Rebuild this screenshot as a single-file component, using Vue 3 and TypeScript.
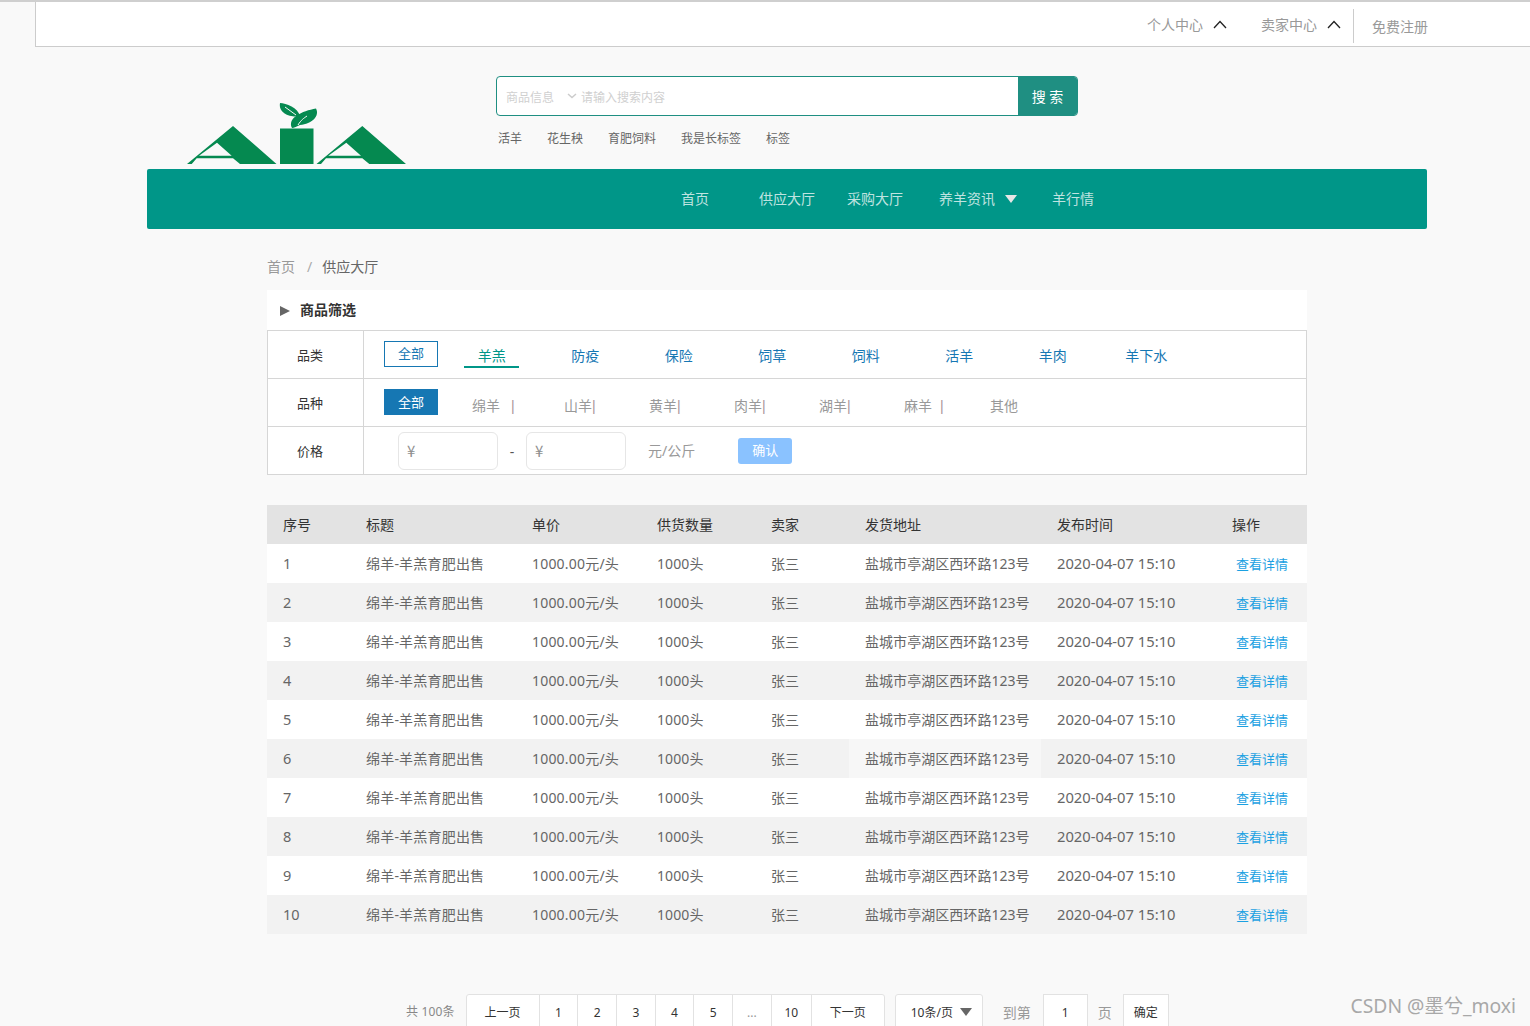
<script setup lang="ts">
const tags: string[] = ['活羊', '花生秧', '育肥饲料', '我是长标签', '标签']
const categories: string[] = ['羊羔', '防疫', '保险', '饲草', '饲料', '活羊', '羊肉', '羊下水']
const breeds: { name: string; sep: string }[] = [
  { name: '绵羊', sep: 'wide' },
  { name: '山羊', sep: 'tight' },
  { name: '黄羊', sep: 'tight' },
  { name: '肉羊', sep: 'tight' },
  { name: '湖羊', sep: 'tight' },
  { name: '麻羊', sep: 'mid' },
  { name: '其他', sep: '' },
]
const heads: string[] = ['序号', '标题', '单价', '供货数量', '卖家', '发货地址', '发布时间', '操作']
const rows: number[] = [1, 2, 3, 4, 5, 6, 7, 8, 9, 10]
const pages: string[] = ['1', '2', '3', '4', '5', '...', '10']
</script>

<template>
  <div class="page">
    <div class="topbar">
      <a class="top-link">个人中心</a>
      <svg class="chev" width="14" height="10" viewBox="0 0 14 10"><path d="M1 9 L7 2.5 L13 9" /></svg>
      <a class="top-link second">卖家中心</a>
      <svg class="chev" width="14" height="10" viewBox="0 0 14 10"><path d="M1 9 L7 2.5 L13 9" /></svg>
      <i class="top-divider"></i>
      <a class="top-reg">免费注册</a>
    </div>

    <div class="wrap">
      <header class="head">
        <svg class="logo" width="219" height="63" viewBox="187 102 219 63">
          <g fill="#058950">
            <path fill-rule="evenodd" d="M187 164 L233 126 L276.500 164 L240 164 L233 158.300 L196.700 158.300 L191.700 164 Z M217 142.700 L199 155.700 L231.700 155.700 Z" />
            <path fill-rule="evenodd" d="M316.500 164 L362.300 126 L406 164 L369.300 164 L362.300 158.300 L326 158.300 L321 164 Z M346.300 142.700 L328.300 155.700 L361 155.700 Z" />
            <rect x="280" y="128.500" width="33.500" height="35.500" />
            <path d="M280 103 C286 103 298 108 300 116 C292 118 278 114 280 103 Z" />
            <path d="M292 128 C287 118 302 111 316 108.500 C320 116 312 124 300 125 C297 126 294 128 292 128 Z" />
          </g>
          <path d="M285 107 L296 115 M298 125 C301 120 304 118 307 116" fill="none" stroke="#f9f9f9" stroke-width="1" />
        </svg>
        <div class="search-col">
          <div class="search">
            <span class="s-type">商品信息</span>
            <svg class="s-arrow" width="10" height="6" viewBox="0 0 10 6"><path d="M1 1 L5 4.500 L9 1" /></svg>
            <span class="s-hold">请输入搜索内容</span>
            <button class="s-btn" type="button">搜 索</button>
          </div>
          <div class="tags">
            <span v-for="t in tags" :key="t">{{ t }}</span>
          </div>
        </div>
      </header>

      <nav class="nav">
        <a class="n-home">首页</a>
        <a class="n-supply">供应大厅</a>
        <a class="n-buy">采购大厅</a>
        <a class="n-news">养羊资讯</a>
        <i class="n-caret"></i>
        <a class="n-market">羊行情</a>
      </nav>

      <main class="content">
        <div class="crumb"><span class="c-first">首页</span><span class="c-sep">/</span><span class="c-last">供应大厅</span></div>

        <div class="filter-title"><i class="ft-tri"></i><b>商品筛选</b></div>
        <div class="filter">
          <div class="f-row">
            <div class="f-label">品类</div>
            <div class="f-body">
              <span class="chip outline">全部</span>
              <div class="cats">
                <span v-for="(c, i) in categories" :key="c" class="cat" :class="{ active: i === 0 }">{{ c }}</span>
              </div>
            </div>
          </div>
          <div class="f-row">
            <div class="f-label">品种</div>
            <div class="f-body">
              <span class="chip solid">全部</span>
              <div class="breeds">
                <span v-for="b in breeds" :key="b.name" class="breed">{{ b.name }}<em v-if="b.sep" :class="b.sep">|</em></span>
              </div>
            </div>
          </div>
          <div class="f-row last">
            <div class="f-label">价格</div>
            <div class="f-body price">
              <div class="p-input">¥</div>
              <span class="p-dash">-</span>
              <div class="p-input">¥</div>
              <span class="p-unit">元/公斤</span>
              <button class="p-ok" type="button">确认</button>
            </div>
          </div>
        </div>

        <table class="grid">
          <colgroup>
            <col style="width: 83px" /><col style="width: 166px" /><col style="width: 125px" /><col style="width: 114px" />
            <col style="width: 94px" /><col style="width: 192px" /><col style="width: 175px" /><col style="width: 91px" />
          </colgroup>
          <thead>
            <tr><th v-for="h in heads" :key="h">{{ h }}</th></tr>
          </thead>
          <tbody>
            <tr v-for="n in rows" :key="n">
              <td class="num">{{ n }}</td>
              <td class="title">绵羊-羊羔育肥出售</td>
              <td class="unit">1000.00元/头</td>
              <td class="qty">1000头</td>
              <td>张三</td>
              <td class="addr" :class="{ hover: n === 6 }">盐城市亭湖区西环路123号</td>
              <td class="date">2020-04-07 15:10</td>
              <td class="op"><a>查看详情</a></td>
            </tr>
          </tbody>
        </table>

        <div class="pager">
          <span class="pg-total">共 100条</span>
          <div class="pg-group">
            <span class="pg wide">上一页</span>
            <span v-for="p in pages" :key="p" class="pg" :class="{ dots: p === '...', ten: p === '10' }">{{ p }}</span>
            <span class="pg wide">下一页</span>
          </div>
          <div class="pg-size">10条/页<i></i></div>
          <span class="pg-goto">到第</span>
          <div class="pg-input">1</div>
          <span class="pg-unit">页</span>
          <div class="pg-ok">确定</div>
        </div>
      </main>
    </div>

    <div class="mark">CSDN @墨兮_moxi</div>
  </div>
</template>

<style>
html, body { margin: 0; padding: 0; background: #f9f9f9; overflow: hidden; }
</style>

<style scoped>
.page {
  position: relative;
  height: 1026px;
  overflow: hidden;
  box-sizing: border-box;
  border-top: 2px solid #cfcfcf;
  background: #f9f9f9;
  color: #666;
  font-family: "Noto Sans", "Noto Sans CJK SC", sans-serif;
  font-size: 14px;
}
em, i { font-style: normal; }

.topbar {
  box-sizing: border-box;
  margin-left: 35px;
  height: 45px;
  background: #fff;
  border-left: 1px solid #ccc;
  border-bottom: 1px solid #ccc;
  display: flex;
  align-items: flex-start;
  padding-left: 1111px;
  color: #999;
  line-height: 20px;
}
.top-link { margin-top: 13px; }
.top-link.second { margin-left: 34px; }
.chev { margin: 17px 0 0 10px; flex: none; }
.chev path { fill: none; stroke: #222; stroke-width: 1.3; }
.top-divider { width: 1px; height: 34px; margin: 7px 0 0 12px; background: #ccc; }
.top-reg { margin: 15px 0 0 18px; }

.wrap { width: 1280px; margin-left: 147px; }
.head { height: 122px; display: flex; align-items: flex-start; }
.logo { margin: 55px 0 0 40px; flex: none; }
.search-col { margin: 29px 0 0 90px; }
.search {
  box-sizing: border-box;
  width: 582px;
  height: 40px;
  display: flex;
  align-items: center;
  background: #fff;
  border: 1px solid #1f8f82;
  border-radius: 4px;
  padding: 1px 0 0 9px;
  font-size: 12px;
  color: #d0d0d0;
  overflow: hidden;
}
.s-arrow { margin: -1px 0 0 13px; flex: none; }
.s-arrow path { fill: none; stroke: #ccc; stroke-width: 1.5; }
.s-hold { margin-left: 4px; }
.s-btn {
  margin: -1px 0 0 auto;
  width: 59px;
  height: 40px;
  border: 0;
  padding: 0;
  background: #1f8f82;
  color: #fff;
  font: inherit;
  font-size: 14px;
}
.tags { display: flex; gap: 25px; margin: 13px 0 0 2px; font-size: 12px; line-height: 20px; color: #666; }

.nav {
  height: 60px;
  box-sizing: border-box;
  padding: 0 0 2px 534px;
  display: flex;
  align-items: center;
  background: #009688;
  border-radius: 2px;
  color: rgba(255, 255, 255, 0.75);
}
.n-supply { margin-left: 50px; }
.n-buy { margin-left: 32px; }
.n-news { margin-left: 36px; }
.n-caret {
  width: 0; height: 0;
  margin: 2px 0 0 10px;
  border-left: 6px solid transparent;
  border-right: 6px solid transparent;
  border-top: 8px solid #e6e6e6;
}
.n-market { margin-left: 35px; }

.content { width: 1040px; margin-left: 120px; }
.crumb { height: 61px; box-sizing: border-box; padding-top: 27px; line-height: 22px; }
.c-first { color: #999; }
.c-sep { color: #aaa; margin: 0 10px 0 12px; }
.c-last { color: #666; }

.filter-title {
  height: 40px;
  box-sizing: border-box;
  padding: 0 0 2px 13px;
  background: #fff;
  display: flex;
  align-items: center;
  color: #333;
  font-size: 14px;
}
.ft-tri {
  width: 0; height: 0;
  margin: 4px 10px 0 0;
  border-top: 5px solid transparent;
  border-bottom: 5px solid transparent;
  border-left: 10px solid #666;
}
.filter { background: #fff; border: 1px solid #d6d6d6; box-sizing: border-box; height: 145px; }
.f-row { height: 48px; display: flex; border-bottom: 1px solid #d6d6d6; box-sizing: border-box; }
.f-row.last { border-bottom: 0; height: 47px; }
.f-label {
  box-sizing: border-box;
  width: 96px;
  flex: none;
  padding-left: 29px;
  border-right: 1px solid #d6d6d6;
  color: #333;
  font-size: 13px;
  line-height: 48px;
}
.f-body { flex: 1; display: flex; align-items: flex-start; padding-left: 20px; }
.chip {
  box-sizing: border-box;
  width: 54px;
  height: 26px;
  margin-top: 10px;
  text-align: center;
  line-height: 23px;
  font-size: 13px;
  flex: none;
}
.chip.outline { border: 1px solid #1677b3; color: #1677b3; }
.chip.solid { background: #1677b3; color: #fff; line-height: 26px; }
.cats { display: flex; margin-left: 26.200px; }
.cat {
  box-sizing: border-box;
  width: 55px;
  height: 27px;
  margin: 10px 38.500px 0 0;
  text-align: center;
  line-height: 30px;
  color: #1677b3;
}
.cat.active { color: #009688; border-bottom: 2px solid #009688; }
.breeds { display: flex; margin-left: 34px; }
.breed { width: 85px; flex: none; line-height: 54px; color: #999; }
.breed:first-child { width: 92px; }
.breed:nth-child(6) { width: 86px; }
.breed em { color: #a8959a; font-family: "Liberation Sans", sans-serif; }
.breed em.wide { margin-left: 11px; }
.breed em.mid { margin-left: 8px; }
.price { padding-left: 34px; align-items: center; }
.p-input {
  box-sizing: border-box;
  width: 100px;
  height: 38px;
  padding-left: 8px;
  line-height: 36px;
  border: 1px solid #e6e6e6;
  border-radius: 6px;
  color: #8f8f8f;
  background: #fff;
  font-family: "Noto Sans CJK SC", sans-serif;
  font-size: 15px;
}
.p-dash { width: 28px; text-align: center; color: #555; margin-top: 2px; }
.p-unit { margin: -1px 0 0 22px; color: #999; }
.p-ok {
  margin-left: 43px;
  width: 54px;
  height: 26px;
  padding: 0 0 2px;
  border: 0;
  border-radius: 3px;
  background: #8ac2ff;
  color: #fff;
  font: inherit;
  font-size: 13px;
}

.grid {
  width: 1040px;
  margin-top: 30px;
  border-collapse: collapse;
  table-layout: fixed;
}
.grid th, .grid td {
  height: 39px;
  padding: 0 0 2px 16px;
  font-weight: 400;
  text-align: left;
  white-space: nowrap;
  box-sizing: border-box;
}
.grid th { background: #e3e3e3; color: #333; }
.grid td { background: #fff; color: #666; }
.grid tbody tr:nth-child(even) td { background: #f2f2f2; }
.grid tbody tr td.hover { background: #f7f7f7; }
.grid td.num { font-size: 14.500px; }
.grid td.title { letter-spacing: 0.2px; }
.grid td.unit { letter-spacing: 0.2px; }
.grid td.qty { letter-spacing: 0.1px; }
.grid td.addr { letter-spacing: 0.05px; }
.grid td.date { font-size: 14.750px; }
.grid td.op { font-size: 13px; padding-bottom: 0; }
.grid td.op a { color: #1ba1e2; margin-left: 4px; }

.pager {
  display: flex;
  align-items: flex-start;
  margin: 60px 0 0 139px;
  font-size: 12px;
  color: #333;
}
.pg-total { margin-top: 9px; margin-right: 11px; color: #888; line-height: 18px; letter-spacing: 0.15px; }
.pg-group {
  display: flex;
  height: 40px;
  background: #fff;
  border: 1px solid #e2e2e2;
  border-radius: 3px;
  box-sizing: border-box;
}
.pg {
  box-sizing: border-box;
  width: 38.700px;
  text-align: center;
  line-height: 35px;
  border-right: 1px solid #e2e2e2;
}
.pg.wide { width: 73px; }
.pg.wide:last-child { border-right: 0; width: 72px; }
.pg.dots { color: #999; }
.pg.ten { width: 40px; }
.pg-size {
  box-sizing: border-box;
  display: flex;
  align-items: flex-start;
  width: 88px;
  height: 40px;
  margin-left: 10px;
  padding-left: 15px;
  background: #fff;
  border: 1px solid #e2e2e2;
  border-radius: 3px;
  line-height: 35px;
}
.pg-size i {
  width: 0; height: 0;
  margin: 13px 0 0 7px;
  border-left: 6px solid transparent;
  border-right: 6px solid transparent;
  border-top: 8px solid #666;
}
.pg-goto { margin: 10px 0 0 20px; font-size: 14px; color: #999; line-height: 18px; }
.pg-input {
  box-sizing: border-box;
  width: 45px;
  height: 40px;
  margin-left: 12px;
  background: #fff;
  border: 1px solid #e2e2e2;
  text-align: center;
  line-height: 35px;
}
.pg-unit { margin: 10px 0 0 10px; font-size: 14px; color: #999; line-height: 18px; }
.pg-ok {
  box-sizing: border-box;
  width: 46px;
  height: 40px;
  margin-left: 11px;
  background: #fff;
  border: 1px solid #e2e2e2;
  text-align: center;
  line-height: 35px;
}

.mark {
  position: absolute;
  right: 14px;
  top: 991px;
  font-size: 19.300px;
  line-height: 26px;
  color: #a8a8a8;
  white-space: nowrap;
}
</style>
